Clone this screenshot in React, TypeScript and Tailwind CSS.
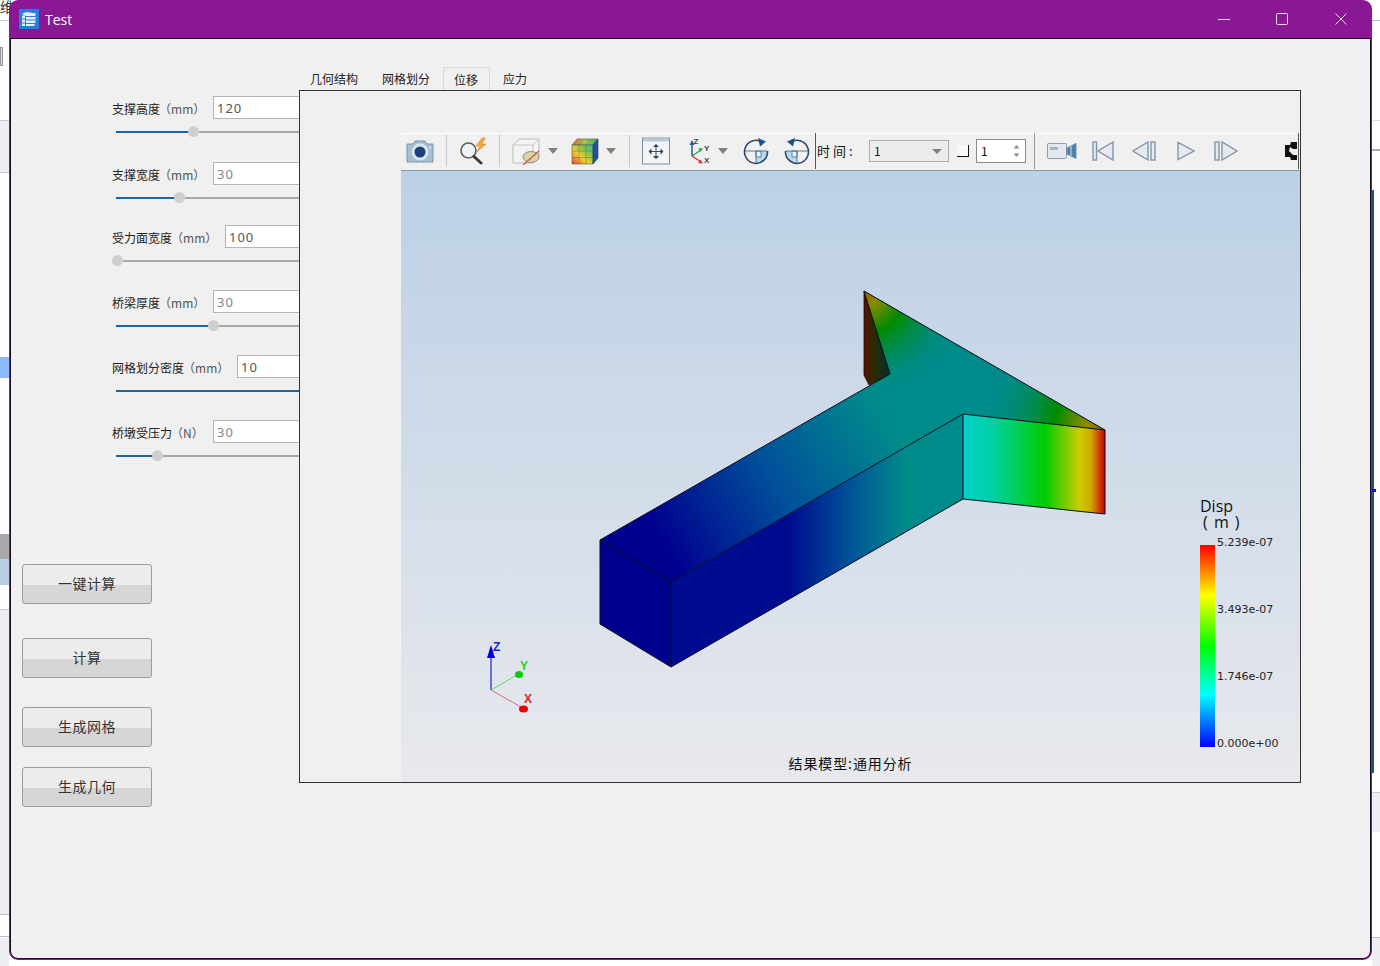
import React from "react";

const rows = [
  { label: "支撑高度", unit: "（mm）", value: "120", labelW: "w-[101px]", mt: "mt-0", fill: 77, dark: true },
  { label: "支撑宽度", unit: "（mm）", value: "30", labelW: "w-[101px]", mt: "mt-[25px]", fill: 63 },
  { label: "受力面宽度", unit: "（mm）", value: "100", labelW: "w-[113px]", mt: "mt-[22px]", fill: 1, dark: true },
  { label: "桥梁厚度", unit: "（mm）", value: "30", labelW: "w-[101px]", mt: "mt-[24px]", fill: 97 },
  { label: "网格划分密度", unit: "（mm）", value: "10", labelW: "w-[125px]", mt: "mt-[24px]", fill: 183, dark: true, noThumb: true },
  { label: "桥墩受压力", unit: "（N）", value: "30", labelW: "w-[101px]", mt: "mt-[24px]", fill: 41 },
];

const buttons = [
  { text: "一键计算", mt: "mt-[103px]" },
  { text: "计算", mt: "mt-[34px]" },
  { text: "生成网格", mt: "mt-[29px]" },
  { text: "生成几何", mt: "mt-[20px]" },
];

function Slider({ fill, noThumb }: { fill: number; noThumb?: boolean }) {
  return (
    <div className="mt-[7px] ml-[4px] h-[11px] flex items-center">
      <div className="h-[2px] bg-[#1f649c] shrink-0" style={{ width: fill }} />
      {!noThumb && <div className="w-[11px] h-[11px] -ml-[5px] rounded-full bg-[#cfcfcf] shrink-0" />}
      <div className="h-[2px] flex-1 bg-[#a9a9a9]" />
    </div>
  );
}

function Sep() {
  return <div className="w-px h-[32px] bg-[#c9c9c9] shrink-0" />;
}

function Caret({ className }: { className: string }) {
  return (
    <svg className={className + " shrink-0"} width="10" height="6" viewBox="0 0 10 6">
      <path d="M0 0H10L5 6Z" fill="#7f7f7f" />
    </svg>
  );
}

function CameraIcon() {
  return (
    <svg className="ml-[5px] shrink-0" width="28" height="24" viewBox="0 0 28 24">
      <path d="M1 5h6l2-3h10l2 3h6v18H1z" fill="#a9bdd3" stroke="#7f93a8" />
      <circle cx="14" cy="13" r="8.500" fill="#dbe5f0" />
      <circle cx="14" cy="13" r="5.500" fill="#1d3f7d" />
      <circle cx="24" cy="8.500" r="1" fill="#e8eef5" />
    </svg>
  );
}

function MagnifierIcon() {
  return (
    <svg className="ml-[12px] shrink-0" width="30" height="28" viewBox="0 0 30 28">
      <circle cx="9.500" cy="13.500" r="7.500" fill="#eef2f6" stroke="#5c5c5c" strokeWidth="1.600" />
      <path d="M15 19.500l7 6.500" stroke="#3a3a3a" strokeWidth="3" strokeLinecap="round" />
      <path d="M23 1l-6 8h4l-3 6 9-8h-4.500l4-6z" fill="#f2a93b" stroke="#c9801c" strokeWidth=".5" />
    </svg>
  );
}

function ClipBoxIcon() {
  return (
    <svg className="ml-[12px] shrink-0" width="28" height="28" viewBox="0 0 28 28">
      <path d="M1 8l6-6h20v18l-6 6H1z" fill="#f3f3f3" stroke="#b9b9b9" />
      <path d="M1 8h20v18M21 8l6-6" fill="none" stroke="#c6c6c6" />
      <ellipse cx="19" cy="20" rx="8" ry="5.500" fill="#d9d3a8" stroke="#8f8f8f" />
      <path d="M11 28L27 14" stroke="#d3563a" strokeWidth="1.200" />
    </svg>
  );
}

function CubeIcon() {
  return (
    <svg className="ml-[13px] shrink-0" width="28" height="28" viewBox="0 0 28 28">
      <defs>
        <linearGradient id="cubeFront" x1="0" y1="1" x2="1" y2="0">
          <stop offset="0" stopColor="#e8402a" />
          <stop offset="0.4" stopColor="#f4d02c" />
          <stop offset="0.75" stopColor="#6fc24c" />
          <stop offset="1" stopColor="#3fb0c9" />
        </linearGradient>
        <linearGradient id="cubeTop" x1="0" y1="0" x2="1" y2="0">
          <stop offset="0" stopColor="#e85a3a" />
          <stop offset="0.5" stopColor="#a8c84a" />
          <stop offset="1" stopColor="#3aa868" />
        </linearGradient>
      </defs>
      <path d="M6 2h21l-5 6H1z" fill="url(#cubeTop)" stroke="#44615c" strokeWidth=".6" />
      <path d="M1 8h21v19H1z" fill="url(#cubeFront)" stroke="#44615c" strokeWidth=".6" />
      <path d="M22 8l5-6v19l-5 6z" fill="#214f9c" stroke="#1c3a70" strokeWidth=".6" />
      <path d="M8 8v19M15 8v19M1 14h21M1 20.500h21M12 2L8 8M20 2l-5 6" stroke="#6e7a5f" strokeWidth=".6" fill="none" />
    </svg>
  );
}

function PanIcon() {
  return (
    <svg className="ml-[12px] shrink-0" width="28" height="28" viewBox="0 0 28 28">
      <rect x=".5" y="1" width="27" height="26" fill="#f2f5f8" stroke="#7f8d9d" />
      <rect x="1" y="1.500" width="26" height="3" fill="#b9c7d6" />
      <path d="M14 8v13M8 14.500h12" stroke="#3d4f63" />
      <path d="M14 7l-3 3h6zM14 22l-3-3h6zM6.500 14.500l3-3v6zM21.500 14.500l-3-3v6z" fill="#2e3f55" />
    </svg>
  );
}

function AxesIcon() {
  return (
    <svg className="ml-[17px] shrink-0" width="24" height="28" viewBox="0 0 24 28">
      <path d="M5 19V6" stroke="#2159a8" strokeWidth="1.500" />
      <path d="M5 3L2.500 8h5z" fill="#2159a8" />
      <path d="M5 19l9-6" stroke="#37a84a" strokeWidth="1.500" />
      <path d="M16 11l-5 .5 2.500 3.500z" fill="#37a84a" />
      <path d="M5 19l9 6" stroke="#d8383a" strokeWidth="1.500" />
      <path d="M16 26.500l-5-.5 2.500-3.500z" fill="#d8383a" />
      <text x="6.500" y="7" fontSize="8" fontWeight="700" fill="#444" fontFamily="Liberation Sans">Z</text>
      <text x="17" y="13.500" fontSize="8" fontWeight="700" fill="#444" fontFamily="Liberation Sans">Y</text>
      <text x="17" y="26" fontSize="8" fontWeight="700" fill="#444" fontFamily="Liberation Sans">X</text>
    </svg>
  );
}

function RotateIcon({ flip, className }: { flip?: boolean; className: string }) {
  return (
    <svg className={className + " shrink-0"} width="26" height="28" viewBox="0 0 26 28">
      <g transform={flip ? "matrix(-1 0 0 1 26 0)" : undefined}>
        <path d="M13 14h11a11 11 0 0 1-11 11z" fill="#b8d8ef" />
        <path d="M13 14h5v6h-5z" fill="#eaf4fb" stroke="#3a6f9f" strokeWidth=".8" />
        <path d="M2 14h22M13 14v11" stroke="#3c5f80" strokeWidth=".8" />
        <path d="M19 5A11.500 11.500 0 1 0 24.500 14" fill="none" stroke="#2f4a66" strokeWidth="1.600" />
        <path d="M15 1l8 3.500-6 5z" fill="#1d4f86" />
      </g>
    </svg>
  );
}

function MovieIcon() {
  return (
    <svg className="ml-[12px] shrink-0" width="30" height="16" viewBox="0 0 30 16">
      <rect x=".5" y=".5" width="19" height="15" rx="1" fill="#e4e8ee" stroke="#8b9cb0" />
      <rect x="3" y="4" width="8" height="3" fill="#a7b7c9" />
      <path d="M20 5l9-4.500v15L20 11z" fill="#4a83ad" stroke="#6d8aa6" />
      <path d="M24 3v10" stroke="#d6e2ec" />
    </svg>
  );
}

function PlayerIcon({ kind, className, width }: { kind: string; className: string; width: number }) {
  return (
    <svg className={className + " shrink-0"} width={width} height="20" viewBox={`0 0 ${width} 20`}>
      {kind === "first" && (
        <g fill="#e6eaef" stroke="#8295ab" strokeWidth="1.400">
          <rect x="1" y="1" width="3.500" height="18" />
          <path d="M21 1v18L6 10z" />
        </g>
      )}
      {kind === "prev" && (
        <g fill="#e6eaef" stroke="#8295ab" strokeWidth="1.400">
          <path d="M16 1v18L1 10z" />
          <rect x="19" y="1" width="4" height="18" />
        </g>
      )}
      {kind === "play" && <path d="M1 1.500v17L17 10z" fill="#e6eaef" stroke="#8295ab" strokeWidth="1.400" />}
      {kind === "next" && (
        <g fill="#e6eaef" stroke="#8295ab" strokeWidth="1.400">
          <rect x="1" y="1" width="4" height="18" />
          <path d="M8 1v18l15-9z" />
        </g>
      )}
    </svg>
  );
}

function Toolbar() {
  return (
    <div className="h-[38px] shrink-0 flex items-center bg-[#f0f0f0] border-t border-t-white border-b border-b-[#8b98a5] pb-[2px]">
      <CameraIcon />
      <div className="ml-[12px]"><Sep /></div>
      <MagnifierIcon />
      <div className="ml-[10px]"><Sep /></div>
      <ClipBoxIcon />
      <Caret className="ml-[8px]" />
      <CubeIcon />
      <Caret className="ml-[7px]" />
      <div className="ml-[13px]"><Sep /></div>
      <PanIcon />
      <AxesIcon />
      <Caret className="ml-[7px]" />
      <RotateIcon className="ml-[15px]" />
      <RotateIcon className="ml-[15px]" flip />
      <div className="ml-[5px] w-px h-[36px] bg-[#555] shrink-0" />
      <span className="ml-[1px] w-[38px] shrink-0 text-[13px] tracking-[3px] text-[#111] whitespace-nowrap">时间:</span>
      <div className="ml-[14px] w-[80px] h-[22px] shrink-0 flex items-center justify-between pl-[4px] pr-[6px] border border-[#adadad] bg-[#ececec] text-[12px] text-[#111]">
        <span>1</span>
        <svg width="10" height="5" viewBox="0 0 10 5"><path d="M0 0H10L5 5Z" fill="#808080" /></svg>
      </div>
      <div className="ml-[8px] w-[12px] h-[12px] shrink-0 border-r border-b border-r-[#111] border-b-[#111] bg-[#f8f8f8]" />
      <div className="ml-[7px] w-[50px] h-[24px] shrink-0 flex items-center justify-between pl-[4px] pr-[5px] border border-[#8a8a8a] bg-white text-[12px] text-[#111]">
        <span>1</span>
        <svg width="7" height="14" viewBox="0 0 7 14"><path d="M3.500 1L6.500 4.500H.5zM3.500 13L6.500 9.500H.5z" fill="#8f8f8f" /></svg>
      </div>
      <div className="ml-[8px] w-px h-[36px] bg-[#9a9a9a] shrink-0" />
      <MovieIcon />
      <PlayerIcon kind="first" className="ml-[15px]" width={22} />
      <PlayerIcon kind="prev" className="ml-[18px]" width={24} />
      <PlayerIcon kind="play" className="ml-[21px]" width={18} />
      <PlayerIcon kind="next" className="ml-[19px]" width={24} />
      <svg className="ml-[47px] shrink-0" width="12" height="18" viewBox="0 0 12 18">
        <path d="M0 3h5l1-3h6v7H8l-3-2-1 4 4 4h4v5H6l-1-3H0z" fill="#111" />
      </svg>
      <div className="ml-[1px] w-[1px] h-[36px] bg-[#555] shrink-0" />
    </div>
  );
}

function Model() {
  const top = "600,540 890,374 864,291 1105,430 963,414 671,582";
  return (
    <svg className="absolute inset-0 w-full h-full" viewBox="401 171 899 611">
      <defs>
        <linearGradient id="topFace" gradientUnits="userSpaceOnUse" x1="660" y1="540" x2="880" y2="410">
          <stop offset="0" stopColor="#00008f" />
          <stop offset="0.5" stopColor="#00509a" />
          <stop offset="1" stopColor="#008b8b" />
        </linearGradient>
        <linearGradient id="sideFace" gradientUnits="userSpaceOnUse" x1="790" y1="0" x2="905" y2="0">
          <stop offset="0" stopColor="#000c90" />
          <stop offset="0.5" stopColor="#004f98" />
          <stop offset="1" stopColor="#008b8b" />
        </linearGradient>
        <linearGradient id="endFace" gradientUnits="userSpaceOnUse" x1="963" y1="0" x2="1105" y2="0">
          <stop offset="0" stopColor="#00d2c8" />
          <stop offset="0.2" stopColor="#00d0a8" />
          <stop offset="0.58" stopColor="#00cc00" />
          <stop offset="0.82" stopColor="#cccc00" />
          <stop offset="0.9" stopColor="#cfa800" />
          <stop offset="1" stopColor="#c80000" />
        </linearGradient>
        <linearGradient id="sliver" gradientUnits="userSpaceOnUse" x1="864" y1="0" x2="890" y2="0">
          <stop offset="0" stopColor="#5a1000" />
          <stop offset="0.35" stopColor="#2c2a00" />
          <stop offset="1" stopColor="#00302c" />
        </linearGradient>
        <radialGradient id="tipA" gradientUnits="userSpaceOnUse" cx="864" cy="291" r="100">
          <stop offset="0" stopColor="#8b6a00" />
          <stop offset="0.15" stopColor="#8b8b00" />
          <stop offset="0.42" stopColor="#008b00" />
          <stop offset="1" stopColor="#008b6a" stopOpacity="0" />
        </radialGradient>
        <radialGradient id="tipB" gradientUnits="userSpaceOnUse" cx="1105" cy="430" r="115">
          <stop offset="0" stopColor="#8b6a00" />
          <stop offset="0.18" stopColor="#8b8b00" />
          <stop offset="0.45" stopColor="#008b00" />
          <stop offset="1" stopColor="#008b6a" stopOpacity="0" />
        </radialGradient>
      </defs>
      <polygon points="864,291 890,374 869,385 864,375" fill="url(#sliver)" stroke="#1a0a00" strokeWidth=".8" />
      <polygon points={top} fill="url(#topFace)" />
      <polygon points={top} fill="url(#tipA)" />
      <polygon points={top} fill="url(#tipB)" />
      <polygon points="671,582 963,414 963,499 671,667" fill="url(#sideFace)" />
      <polygon points="600,540 671,582 671,667 600,624" fill="#00008f" />
      <polygon points="963,414 1105,430 1105,514 963,499" fill="url(#endFace)" />
      <g fill="none" stroke="#0a0a20" strokeWidth="1">
        <polyline points={`${top} 600,540`} />
        <path d="M600 540V624L671 667V582M671 667L963 499V414M963 499L1105 514V430" />
      </g>
      <path d="M491 690V655" stroke="#2020c0" strokeWidth="1.200" />
      <path d="M491 645l-4 13h8z" fill="#0000e0" />
      <path d="M491 690L517 675" stroke="#62d862" strokeWidth="1" />
      <ellipse cx="519" cy="674.500" rx="4" ry="3.500" fill="#10c810" />
      <path d="M491 690L521 707" stroke="#d87070" strokeWidth="1" />
      <ellipse cx="523.500" cy="709" rx="4.500" ry="3.500" fill="#e80000" />
      <g fontFamily="Liberation Sans" fontWeight="700" fontSize="12">
        <text x="493" y="651" fill="#2020e0">Z</text>
        <text x="520" y="670" fill="#20d820">Y</text>
        <text x="524" y="703" fill="#e02020">X</text>
      </g>
    </svg>
  );
}

function Legend() {
  return (
    <div className="absolute left-[799px] top-[327px] w-[90px]">
      <div className="text-[16px] leading-[17px] text-[#111] font-['Open_Sans',sans-serif]">Disp</div>
      <div className="pl-[3px] text-[16px] leading-[15px] tracking-[1px] text-[#111] font-['Open_Sans',sans-serif]">( m )</div>
      <div className="flex mt-[15px] h-[202px]">
        <div className="w-[15px] bg-[linear-gradient(#ff0000,#ffff00_25%,#00ff00_50%,#00ffff_74%,#0000ff_100%)]" />
        <div className="ml-[2px] flex-1 flex flex-col justify-between -mt-[9px] -mb-[4px] text-[11px] leading-[14px] text-[#222] font-['DejaVu_Sans',sans-serif] whitespace-nowrap">
          <span>5.239e-07</span>
          <span>3.493e-07</span>
          <span>1.746e-07</span>
          <span>0.000e+00</span>
        </div>
      </div>
    </div>
  );
}

export default function App() {
  return (
    <div className="relative w-[1380px] h-[966px] overflow-hidden bg-white font-['Noto_Sans_CJK_SC','DejaVu_Sans',sans-serif]">
      {/* desktop behind the window */}
      <span className="absolute left-0 top-[-4px] text-[14px] text-[#333]">维</span>
      <div className="absolute left-0 top-[20px] w-[9px] h-px bg-[#b8d0de]" />
      <div className="absolute left-0 top-[47px] w-[3px] h-[19px] border border-[#999] bg-[#ddd]" />
      <div className="absolute left-0 top-[120px] w-[9px] h-[53px] bg-[#eceef2] border-y border-[#ccc]" />
      <div className="absolute left-0 top-[357px] w-[9px] h-[21px] bg-[#8cb9f9]" />
      <div className="absolute left-0 top-[534px] w-[9px] h-[25px] bg-[#a9a9ab]" />
      <div className="absolute left-0 top-[559px] w-[9px] h-[26px] bg-[#b9d0e4]" />
      <div className="absolute left-0 top-[609px] w-[9px] h-[305px] bg-[#eceef2] border-t border-[#ccc]" />
      <div className="absolute left-0 top-[914px] w-[9px] h-[23px] border-y border-[#bbb]" />
      <div className="absolute left-0 top-[938px] w-[9px] h-[28px] bg-[#eceef2]" />
      <div className="absolute left-[1372px] top-[20px] w-[8px] h-px bg-[#9cc6d8]" />
      <div className="absolute left-[1372px] top-[120px] w-[8px] h-px bg-[#ddd]" />
      <div className="absolute left-[1372px] top-[149px] w-[8px] h-[2px] bg-[#aaa]" />
      <div className="absolute left-[1372px] top-[190px] w-[2px] h-[583px] bg-[#1c5289]" />
      <div className="absolute left-[1372px] top-[489px] w-[4px] h-[3px] bg-[#1010e0]" />
      <div className="absolute left-[1372px] top-[792px] w-[8px] h-[40px] bg-[#eceef2] border-t border-[#ccc]" />
      <div className="absolute left-[1372px] top-[937px] w-[8px] h-[29px] bg-[#eceef2] border-t border-[#bbb]" />

      {/* window */}
      <div className="absolute left-[9px] top-0 w-[1363px] h-[960px] flex flex-col rounded-[9px] bg-[#8a1794] px-px pb-px">
        <div className="h-[38px] shrink-0 flex items-center pl-[9px] text-white">
          <svg width="20" height="20" viewBox="0 0 20 20" className="shrink-0">
            <rect width="20" height="20" fill="#2b7be0" />
            <path d="M3 5l4-2 10 1.500-1 2.500H7zM3 6.500h3v3H3zM3 10.500h3v3H3zM3 14.500h3v2.500H3zM7 8h10l-1 2.500H7zM7 11.500h10l-1 2.500H7zM7 15h9l-1 2H7z" fill="#e4f0ff" />
          </svg>
          <span className="ml-[6px] text-[14px] font-['Open_Sans',sans-serif]">Test</span>
          <svg className="ml-auto" width="12" height="12" viewBox="0 0 12 12"><path d="M0 6.500H12" stroke="#f0dff2" strokeWidth="1" /></svg>
          <svg className="ml-[46px]" width="12" height="12" viewBox="0 0 12 12"><rect x=".5" y=".5" width="11" height="11" rx="1" fill="none" stroke="#f0dff2" /></svg>
          <svg className="ml-[47px] mr-[24px]" width="12" height="12" viewBox="0 0 12 12"><path d="M.5 .5l11 11M11.500 .5l-11 11" stroke="#f0dff2" /></svg>
        </div>

        <div className="flex-1 min-h-0 flex rounded-b-[8px] border border-[#1c0a24] bg-[#f0f0f0] text-[#222]">
          {/* parameters and actions */}
          <div className="w-[288px] shrink-0 flex flex-col pt-[57px]">
            <div className="pl-[101px]">
              {rows.map((r) => (
                <div key={r.label} className={r.mt}>
                  <div className="h-[23px] flex items-center">
                    <span className={r.labelW + " shrink-0 pt-[2px] text-[12px] text-[#222] whitespace-nowrap"}>
                      {r.label}
                      <span className="-ml-[1px] text-[#555]">{r.unit}</span>
                    </span>
                    <div className={"flex-1 h-full flex items-center pl-[3px] pt-[2px] bg-white border border-r-0 border-[#b5b5b5] text-[13px] tracking-[1px] font-['Noto_Sans',sans-serif] " + (r.dark ? "text-[#555]" : "text-[#888]")}>
                      {r.value}
                    </div>
                  </div>
                  <Slider fill={r.fill} noThumb={r.noThumb} />
                </div>
              ))}
            </div>
            <div className="pl-[11px]">
              {buttons.map((b) => (
                <button
                  key={b.text}
                  className={b.mt + " block w-[130px] h-[40px] pb-[2px] rounded-[3px] border border-[#9c9c9c] bg-[linear-gradient(#ececec_52%,#d6d6d6_52%)] text-[14px] tracking-[0.5px] text-[#333]"}
                >
                  {b.text}
                </button>
              ))}
            </div>
          </div>

          {/* tabs and result view */}
          <div className="w-[1002px] shrink-0 flex flex-col pt-[28px]">
            <div className="h-[23px] flex text-[12px] text-[#222] leading-[24px]">
              <span className="w-[72px] pl-[11px] whitespace-nowrap">几何结构</span>
              <span className="w-[72px] pl-[11px] whitespace-nowrap">网格划分</span>
              <span className="w-[47px] pl-[10px] whitespace-nowrap bg-[#f0f0f0] border border-b-0 border-[#d9d9d9]">位移</span>
              <span className="ml-px w-[47px] pl-[12px] whitespace-nowrap">应力</span>
            </div>
            <div className="h-[693px] flex flex-col border border-[#333] pt-[42px] pl-[101px]">
              <Toolbar />
              <div className="relative flex-1 bg-[linear-gradient(#bcd0e6,#e8e9ed)]">
                <Model />
                <Legend />
                <div className="absolute inset-x-0 bottom-[9px] text-center text-[14px] tracking-[0.9px] leading-[20px] text-[#111]">结果模型:通用分析</div>
              </div>
            </div>
          </div>
        </div>
      </div>
    </div>
  );
}
